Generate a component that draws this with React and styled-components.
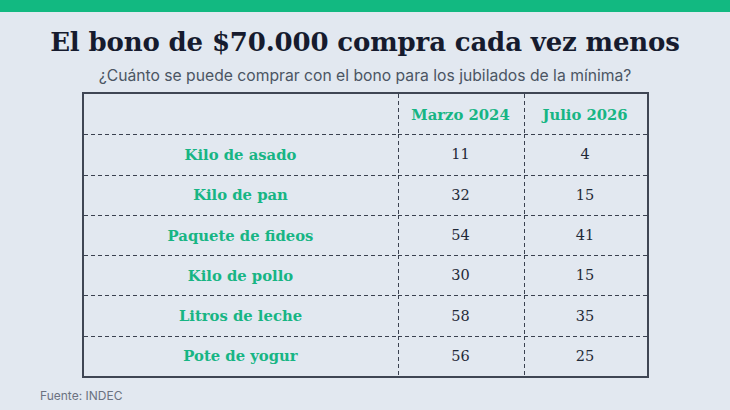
import React from "react";
import styled, { createGlobalStyle } from "styled-components";

const GlobalStyle = createGlobalStyle`
  html, body {
    margin: 0;
    padding: 0;
    background: #e2e8f0;
  }
`;

const rows = [
  { label: "Kilo de asado", a: 11, b: 4 },
  { label: "Kilo de pan", a: 32, b: 15 },
  { label: "Paquete de fideos", a: 54, b: 41 },
  { label: "Kilo de pollo", a: 30, b: 15 },
  { label: "Litros de leche", a: 58, b: 35 },
  { label: "Pote de yogur", a: 56, b: 25 },
];

const LINE = "#3a4150";
const hDash = `repeating-linear-gradient(to right, ${LINE} 0 4px, transparent 4px 7px)`;
const vDash = `repeating-linear-gradient(to bottom, ${LINE} 0 4px, transparent 4px 7px)`;

const Page = styled.div`
  width: 730px;
  height: 410px;
  background: #e2e8f0;
  display: flex;
  flex-direction: column;
  overflow: hidden;
`;

const TopBar = styled.div`
  height: 12px;
  background: #12b981;
  flex: 0 0 auto;
`;

const Title = styled.h1`
  margin: 13px 0 0;
  text-align: center;
  font-family: "DejaVu Serif", "Liberation Serif", serif;
  font-size: 26px;
  font-weight: 700;
  color: #161b2e;
  line-height: 34px;
  letter-spacing: -0.15px;
`;

const Subtitle = styled.p`
  margin: 7px 0 0;
  text-align: center;
  font-family: Inter, "Liberation Sans", sans-serif;
  font-size: 15.7px;
  color: #4b5563;
  line-height: 20px;
`;

const Table = styled.div`
  margin: 6px auto 0;
  width: 567px;
  box-sizing: border-box;
  border: 2px solid #3f4654;
  display: grid;
  grid-template-columns: 314px 126px 1fr;
`;

const Cell = styled.div`
  height: 40.3px;
  box-sizing: border-box;
  display: flex;
  align-items: center;
  justify-content: center;
  font-family: "DejaVu Serif", "Liberation Serif", serif;
  font-size: ${({ $green }) => ($green ? "14.8px" : "14.5px")};
  font-weight: ${({ $green }) => ($green ? 700 : 400)};
  color: ${({ $green }) => ($green ? "#17b584" : "#1f2937")};
  background-image: ${({ $first, $col }) =>
    [!$first && hDash, $col && vDash].filter(Boolean).join(", ") || "none"};
  background-size: ${({ $first, $col }) =>
    [!$first && "100% 1.2px", $col && "1.2px 100%"].filter(Boolean).join(", ") || "auto"};
  background-position: ${({ $first, $col }) =>
    [!$first && "left top", $col && "left top"].filter(Boolean).join(", ") || "0 0"};
  background-repeat: no-repeat;
`;

const Source = styled.div`
  margin: 10px 0 0 40px;
  font-family: Inter, "Liberation Sans", sans-serif;
  font-size: 12px;
  color: #6b7280;
`;

export default function App() {
  return (
    <Page>
      <GlobalStyle />
      <TopBar />
      <Title>El bono de $70.000 compra cada vez menos</Title>
      <Subtitle>¿Cuánto se puede comprar con el bono para los jubilados de la mínima?</Subtitle>
      <Table>
        <Cell $first />
        <Cell $first $col $green>Marzo 2024</Cell>
        <Cell $first $col $green>Julio 2026</Cell>
        {rows.map((r) => (
          <React.Fragment key={r.label}>
            <Cell $green>{r.label}</Cell>
            <Cell $col>{r.a}</Cell>
            <Cell $col>{r.b}</Cell>
          </React.Fragment>
        ))}
      </Table>
      <Source>Fuente: INDEC</Source>
    </Page>
  );
}
